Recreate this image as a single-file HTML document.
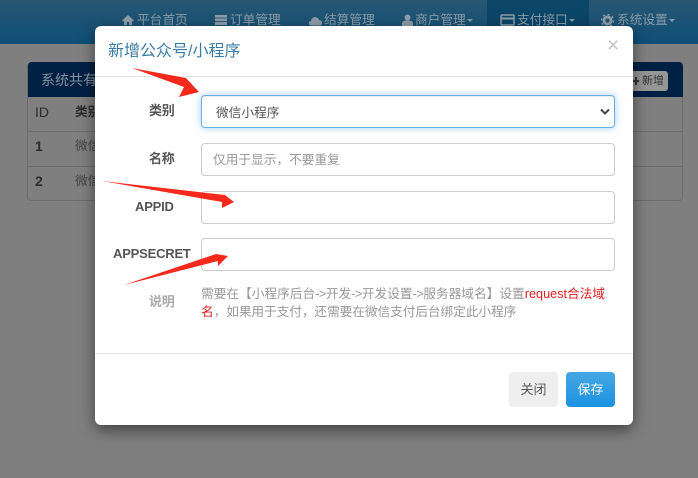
<!DOCTYPE html>
<html><head><meta charset="utf-8"><style>
html,body{margin:0;padding:0;width:698px;height:478px;overflow:hidden;background:#7f7f7f}
body{position:relative;font-family:"Liberation Sans","Noto Sans CJK SC",sans-serif;font-size:12.7px;color:#555}
.a{position:absolute;white-space:nowrap}
.nav{left:0;top:0;width:698px;height:44px;background:linear-gradient(#285672,#0e4f77)}
.act{left:487px;top:0;width:102px;height:44px;background:#0b4568}
.n{top:12px;font-size:12.7px;line-height:16px;color:#8b9ca8}
.c{top:19px;width:0;height:0;border-left:3px solid transparent;border-right:3px solid transparent;border-top:3px solid #8b9ca8}
.modal{left:95px;top:26px;width:538px;height:399px;background:#fff;border-radius:6px;box-shadow:0 5px 15px rgba(0,0,0,.5)}
.f{left:201px;width:412px;height:31px;border:1px solid #ccc;border-radius:4px;background:#fff}
.l{font-weight:bold;line-height:18px;color:#555;font-size:13px;letter-spacing:-.2px}
.s{letter-spacing:-.5px}
</style></head><body>
<div class="a nav"></div><div class="a act"></div>
<svg class="a" style="left:121px;top:14px" width="14" height="12" viewBox="0 0 14 12"><path d="M7 1 1 6.500 2 7.500 3 6.700V11H6V8H8V11H11V6.700L12 7.500 13 6.500Z" fill="#8d9da8"/></svg>
<div class="a n" style="left:137px">平台首页</div>
<svg class="a" style="left:214px;top:14px" width="14" height="12"><path d="M1 1H13V11H1Z" fill="#8d9da8"/><path d="M1 4H13M1 7.500H13" stroke="#2a6080"/></svg>
<div class="a n" style="left:230px">订单管理</div>
<svg class="a" style="left:308px;top:15px" width="15" height="11"><path d="M3 10.500C0 10.500 0 6 3 6 3.500 1 10 1 11 5 15 5 15 10.500 12 10.500Z" fill="#8d9da8"/></svg>
<div class="a n" style="left:324px">结算管理</div>
<svg class="a" style="left:402px;top:14px" width="11" height="12"><circle cx="5.500" cy="3.500" r="3" fill="#8d9da8"/><path d="M0 12V9C0 7 3 6.500 5.500 6.500S11 7 11 9V12Z" fill="#8d9da8"/></svg>
<div class="a n" style="left:415px">商户管理</div><div class="a c" style="left:467px"></div>
<svg class="a" style="left:500px;top:14px" width="15" height="12"><rect x="1" y="1" width="13" height="10" rx="1" fill="none" stroke="#8d9da8" stroke-width="1.500"/><path d="M1 4.500H14" stroke="#8d9da8" stroke-width="2"/></svg>
<div class="a n" style="left:517px">支付接口</div><div class="a c" style="left:569px"></div>
<svg class="a" style="left:601px;top:14px" width="13" height="13"><circle cx="6.500" cy="6.500" r="3.500" fill="none" stroke="#8d9da8" stroke-width="3"/><circle cx="6.500" cy="6.500" r="6" fill="none" stroke="#8d9da8" stroke-width="1.500" stroke-dasharray="2 2.700"/></svg>
<div class="a n" style="left:617px">系统设置</div><div class="a c" style="left:669px"></div>

<div class="a" style="left:27px;top:62px;width:656px;height:139px;border:1px solid #6c6c6c;border-radius:4px;box-sizing:border-box"></div>
<div class="a" style="left:28px;top:62px;width:655px;height:35px;background:#002044;border-radius:4px 4px 0 0"></div>
<div class="a" style="left:41px;top:71px;color:#85929e;font-size:14px;line-height:18px">系统共有</div>
<div class="a" style="left:28px;top:131px;width:654px;height:1px;background:#6c6c6c"></div>
<div class="a" style="left:28px;top:166px;width:654px;height:1px;background:#6c6c6c"></div>
<div class="a" style="left:35px;top:103px;color:#2c2c2c;font-size:14px;line-height:18px">ID</div>
<div class="a" style="left:75px;top:103px;color:#2c2c2c;font-weight:bold;line-height:18px">类别</div>
<div class="a" style="left:35px;top:137px;color:#2c2c2c;font-weight:bold;font-size:14px;line-height:18px">1</div>
<div class="a" style="left:75px;top:137px;color:#444;line-height:18px">微信</div>
<div class="a" style="left:35px;top:172px;color:#2c2c2c;font-weight:bold;font-size:14px;line-height:18px">2</div>
<div class="a" style="left:75px;top:172px;color:#444;line-height:18px">微信</div>
<div class="a" style="left:630px;top:71px;width:38px;height:20px;background:#969696;border-radius:3px;color:#333;font-size:11px;line-height:20px;text-indent:12px">新增</div>
<div class="a" style="left:633px;top:80px;width:6px;height:2px;background:#333"></div>
<div class="a" style="left:635px;top:77px;width:2px;height:8px;background:#333"></div>

<div class="a modal"></div>
<div class="a" style="left:108px;top:42px;font-size:16px;line-height:20px;color:#3a7ca5">新增公众号/小程序</div>
<div class="a" style="left:607px;top:36px;font-size:21px;line-height:20px;color:#c8c8c8">×</div>
<div class="a" style="left:95px;top:76px;width:538px;height:1px;background:#e5e5e5"></div>

<div class="a l" style="left:149px;top:102px">类别</div>
<div class="a f" style="top:95px;border-color:#66afe9;box-shadow:inset 0 1px 1px rgba(0,0,0,.075),0 0 8px rgba(102,175,233,.6)"></div>
<div class="a" style="left:216px;top:104px;line-height:18px;color:#555">微信小程序</div>
<svg class="a" style="left:599px;top:108px" width="12" height="8"><path d="M2 1.500 6 5.500 10 1.500" fill="none" stroke="#444" stroke-width="2"/></svg>

<div class="a l" style="left:149px;top:150px">名称</div>
<div class="a f" style="top:143px"></div>
<div class="a" style="left:213px;top:151px;line-height:18px;color:#999">仅用于显示，不要重复</div>

<div class="a l" style="left:135px;top:198px">APPID</div>
<div class="a f" style="top:191px"></div>
<div class="a l" style="left:113px;top:245px">APPSECRET</div>
<div class="a f" style="top:238px"></div>

<div class="a l" style="left:149px;top:293px;color:#aaa">说明</div>
<div class="a" style="left:201px;top:285px;line-height:18px;color:#999">需要在【小程序后台<span class="s">-&gt;</span>开发<span class="s">-&gt;</span>开发设置<span class="s">-&gt;</span>服务器域名】设置<span style="color:#e02020">request合法域</span></div>
<div class="a" style="left:201px;top:303px;line-height:18px;color:#999;letter-spacing:-.08px"><span style="color:#e02020">名</span>，如果用于支付，还需要在微信支付后台绑定此小程序</div>

<div class="a" style="left:95px;top:353px;width:538px;height:1px;background:#e5e5e5"></div>
<div class="a" style="left:509px;top:372px;width:49px;height:35px;background:#eee;border-radius:4px;text-align:center;line-height:35px;font-size:13px;color:#555">关闭</div>
<div class="a" style="left:566px;top:372px;width:49px;height:35px;background:linear-gradient(#47a7e3,#1b92e0);border-radius:4px;text-align:center;line-height:35px;font-size:13px;color:#fff">保存</div>

<svg class="a" style="left:0;top:0" width="698" height="478">
<polygon fill="#f5291c" points="132,68 186,78 199,92 179,97 184,87"/>
<polygon fill="#f5291c" points="102,181 225,195 234,202 222,208 222,202"/>
<polygon fill="#f5291c" points="124,285 216,254 228,256 218,266 218,261"/>
</svg>
</body></html>
